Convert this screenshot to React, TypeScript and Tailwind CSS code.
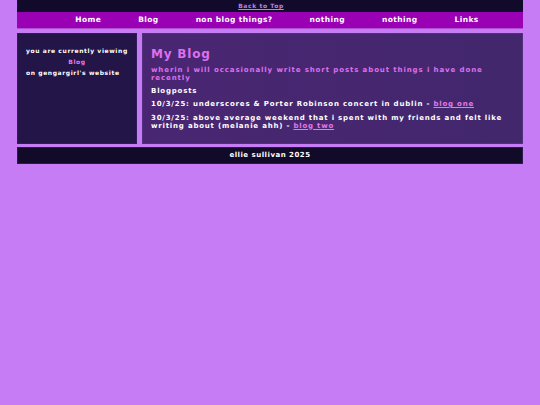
import React from 'react';

const navItems = ['Home', 'Blog', 'non blog things?', 'nothing', 'nothing', 'Links'];

export default function App() {
  return (
    <div
      className="min-h-[405px] bg-[#c67cf4] px-[17px] text-white font-bold"
      style={{ fontFamily: '"DejaVu Sans", "Liberation Sans", sans-serif' }}
    >
      {/* top link */}
      <div className="h-[12px] bg-[#120a2b] flex items-center justify-center pr-[18px]">
        <a href="#" className="text-[6px] text-[#b585e6] underline tracking-[0.6px] leading-none">
          Back to Top
        </a>
      </div>

      {/* nav */}
      <nav className="h-[17px] bg-[#9a00b4] border-b border-[#b24ed0] flex items-center justify-center gap-[37px] pl-[14px]">
        {navItems.map((item, i) => (
          <a key={i} href="#" className="text-[7.5px] tracking-[0.4px] leading-none text-white">
            {item}
          </a>
        ))}
      </nav>

      <div className="flex gap-[5px] mt-[4px] h-[111px]">
        {/* sidebar */}
        <aside className="w-[120px] bg-[#231547] border border-[#2f1d5a] px-[8px] pt-[11px] text-[6px] tracking-[0.6px] leading-[11px]">
          <p>you are currently viewing</p>
          <p className="text-center text-[#e27be8]">Blog</p>
          <p>on gengargirl's website</p>
        </aside>

        {/* main */}
        <main className="flex-1 bg-gradient-to-r from-[#4a2672] to-[#42276d] border border-[#52307e] px-[8px] pt-[12px]">
          <h1 className="text-[12px] tracking-[0.8px] leading-[16px] text-[#de6fee]">My Blog</h1>
          <p className="mt-[5px] text-[7px] tracking-[0.9px] leading-[7.5px] text-[#de6fee]">
            wherin i will occasionally write short posts about things i have done recently
          </p>
          <p className="mt-[5px] text-[7px] tracking-[0.8px] leading-[8px]">Blogposts</p>
          <p className="mt-[5px] text-[7px] tracking-[0.8px] leading-[8px]">
            10/3/25: underscores &amp; Porter Robinson concert in dublin -{' '}
            <a href="#" className="text-[#e27be8] underline">blog one</a>
          </p>
          <p className="mt-[5.5px] text-[7px] tracking-[0.8px] leading-[8px]">
            30/3/25: above average weekend that i spent with my friends and felt like writing about (melanie ahh) -{' '}
            <a href="#" className="text-[#e27be8] underline">blog two</a>
          </p>
        </main>
      </div>

      {/* footer */}
      <footer className="mt-[3px] h-[17px] bg-[#110a29] border border-[#2a1c4a] flex items-center justify-center text-[7px] tracking-[0.5px] leading-none">
        ellie sullivan 2025
      </footer>
    </div>
  );
}
